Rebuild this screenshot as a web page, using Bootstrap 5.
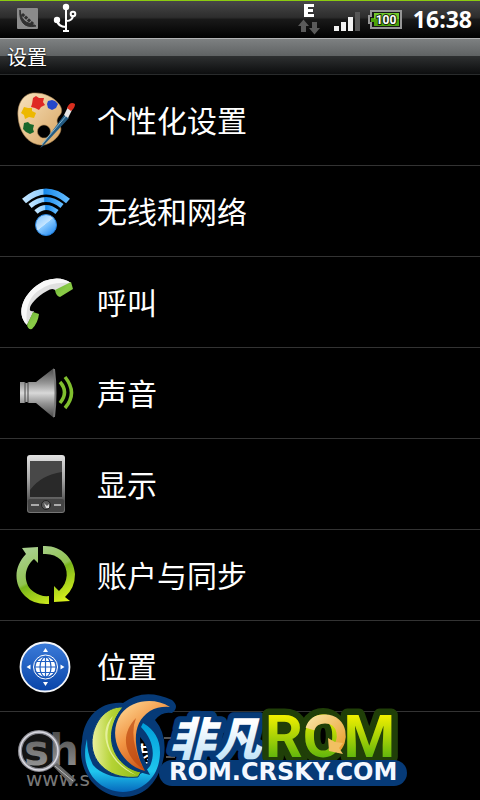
<!DOCTYPE html>
<html lang="zh-CN">
<head>
<meta charset="utf-8">
<meta name="viewport" content="width=device-width, initial-scale=1">
<title>设置</title>
<link href="https://cdn.jsdelivr.net/npm/bootstrap@5.3.0/dist/css/bootstrap.min.css" rel="stylesheet">
<style>
  body { background: #000; color: #fff; font-family: "Noto Sans CJK SC", sans-serif; }
  .screen { min-height: 100vh; max-height: 100vh; }
  .statusbar { height: 38px; border-top: 1px solid #8ccb10; background: linear-gradient(#484848 0, #2d2d2d 44%, #191919 50%, #000 100%); }
  .clock { font: 700 23px/36px "Open Sans", sans-serif; }
  .titlebar { height: 37px; padding: 0 7px; border-top: 1px solid #b0b2b3; border-bottom: 1px solid #292b2c; background: linear-gradient(#7d8081 0, #5f6263 49%, #2d2f30 50%, #0c0d0e 100%); }
  .titlebar h1 { font-size: 20px; line-height: 35px; text-shadow: 0 1px 2px #000; }
  .settings .list-group-item { padding: 15px; border-color: #333; border-width: 0 0 1px; gap: 22px; font-size: 30px; line-height: 58px; }
  .settings svg { width: 60px; height: 60px; flex: none; }
  .brand { pointer-events: none; }
</style>
<script src="https://cdn.jsdelivr.net/npm/bootstrap@5.3.0/dist/js/bootstrap.bundle.min.js"></script>
</head>
<body>
<div class="screen position-relative overflow-hidden">
  <div class="statusbar d-flex justify-content-between ps-3 pe-2">
    <div class="d-flex">
      <svg width="64" height="37" viewBox="16 1 64 37" aria-hidden="true">
        <rect x="17" y="8" width="21" height="21" rx="1" fill="#8b8b8b"/>
        <path d="M20 10Q21 19 26 22L36 26Q27 28 23 23Q19 18 20 10Z" fill="#303030" stroke="#303030"/>
        <path d="M22 14L34 25" stroke="#303030" stroke-width="3" stroke-dasharray="3 1"/>
        <g fill="none" stroke="#fff" stroke-width="2"><path d="M66 7V31M57 20Q58 27 66 27M73 15Q73 21 66 21"/><circle cx="73" cy="14" r="2.3"/></g>
        <g fill="#fff"><circle cx="66" cy="7" r="3.2"/><circle cx="57" cy="20" r="3.2"/><path d="M63 30h6v2h-6z"/></g>
      </svg>
    </div>
    <div class="d-flex gap-2">
      <svg width="108" height="37" viewBox="296 1 108 37" aria-hidden="true">
        <path d="M303 4h10v3h-6v2h5v3h-5v2h6v3h-10z" fill="#fff"/>
        <path d="M302.500 19.500l5.500 6.500h-3v6h-5v-6h-3zM311 22h5v6h3l-5.500 6.500L308 28h3z" fill="#5a5a5a"/>
        <g fill="#f1f1f1"><path d="M333 26h5v5h-5zM340 22h5v9h-5zM347 17h5v14h-5z"/></g>
        <path d="M354 12h5v19h-5z" fill="#565656"/>
        <path d="M370 11h30v17h-30v-5h-2v-7h2z" fill="#151515" stroke="#969696" stroke-width="2"/>
        <path d="M373 13h25v13h-25v-4h-3v-4h3z" fill="#4ca30b"/><path d="M373 13h25v6h-25z" fill="#70c82b"/>
        <text x="385" y="24" text-anchor="middle" font-family="Roboto, sans-serif" font-size="12" font-weight="700" fill="#fff" stroke="#162607" stroke-width="2" paint-order="stroke">100</text>
      </svg>
      <time class="clock">16:38</time>
    </div>
  </div>
  <header class="titlebar"><h1 class="m-0 fw-normal">设置</h1></header>

  <main class="settings list-group list-group-flush">
    <a href="#personal" class="list-group-item d-flex bg-transparent text-white">
      <svg viewBox="15 90 60 60" aria-hidden="true">
        <defs><linearGradient id="wood" x2="1" y2="1"><stop stop-color="#f8e2bd"/><stop offset="1" stop-color="#d7a562"/></linearGradient></defs>
        <path fill-rule="evenodd" d="M36 93C25 92 17 102 18 116C19 134 30 146 44 145C54 143 64 132 60 126C56 123 56 119 60 115C67 107 51 93 36 93ZM44 125A6.500 6.500 0 1 1 43.900 125Z" fill="url(#wood)" stroke="#a98554" stroke-width=".6"/>
        <path d="M33 98l3-2 3 2 5 0-1 4 2 3-4 2-2 3-4-2-4-1 1-3z" fill="#df2824"/>
        <path d="M48 101l4-1 3 1 3 3-2 4-4 2-4-2-1-4z" fill="#2447ca"/>
        <path d="M24 107l4 1 4 0 0 3 4 2-2 5-5-1-4 2-1-4-3-2z" fill="#edb800"/>
        <path d="M24 123l4-1 2 2 4 1-1 4 1 3-4 2-4-2-3-3z" fill="#19682b"/>
        <path d="M40 148L64 115L69 118L43 146Z" fill="#235b82"/><path d="M42 144L66 116" stroke="#83b7d3" stroke-width="1"/>
        <path d="M64 115l4-8 4 3-4 8z" fill="#e6e6e6"/><path d="M67 108q3-7 8-4q0 4-4 7z" fill="#d92e1e"/>
      </svg><span>个性化设置</span></a>
    <a href="#wireless" class="list-group-item d-flex bg-transparent text-white">
      <svg viewBox="15 181 60 60" aria-hidden="true">
        <defs><linearGradient id="wave"><stop stop-color="#c2e5ff"/><stop offset=".42" stop-color="#8fceff"/><stop offset=".46" stop-color="#1689ec"/><stop offset="1" stop-color="#63bbff"/></linearGradient>
        <linearGradient id="ball" x2=".8" y2="1"><stop stop-color="#7dc2ff"/><stop offset=".5" stop-color="#c5e5ff"/><stop offset=".52" stop-color="#8acaff"/><stop offset="1" stop-color="#268cf2"/></linearGradient></defs>
        <g fill="none" stroke="url(#wave)"><path d="M24 201Q46 182 68 201" stroke-width="6"/><path d="M30 206Q46 193 62 206" stroke-width="5"/><path d="M36 212Q46 203 57 212" stroke-width="5"/></g>
        <circle cx="46" cy="225" r="10.500" fill="url(#ball)" stroke="#2782dc"/>
      </svg><span>无线和网络</span></a>
    <a href="#call" class="list-group-item d-flex bg-transparent text-white">
      <svg viewBox="15 272 60 60" aria-hidden="true">
        <defs><linearGradient id="cap" x2="1" y2="1"><stop stop-color="#328b13"/><stop offset=".5" stop-color="#8acb47"/><stop offset="1" stop-color="#55a71e"/></linearGradient></defs>
        <path d="M27 325C15 313 23 292 44 281Q60 275 71 283L56 291Q53 287 47 291C36 297 30 305 30 308Q29 312 34 311Z" fill="#e0e0e0"/>
        <path d="M27 325C15 313 23 292 44 281Q60 275 71 283Q50 281 38 291Q24 301 27 325Z" fill="#f8f8f8"/>
        <path d="M27 325L33 312L39 314Q38 323 32 329Q28 330 27 325ZM55 290L71 282L73 289L60 297Q56 296 55 290Z" fill="url(#cap)"/>
      </svg><span>呼叫</span></a>
    <a href="#sound" class="list-group-item d-flex bg-transparent text-white">
      <svg viewBox="15 363 60 60" aria-hidden="true">
        <defs><linearGradient id="metal" x2="0" y2="1"><stop stop-color="#454545"/><stop offset=".3" stop-color="#959595"/><stop offset=".5" stop-color="#d8d8d8"/><stop offset=".7" stop-color="#969696"/><stop offset="1" stop-color="#444"/></linearGradient></defs>
        <path d="M20 382h5v1h3v-1h8L54 368q3 25 0 50L36 403h-8v-1h-3v1h-5z" fill="url(#metal)"/><path d="M25 382v21M28 382v21" stroke="#444"/><path d="M54 369q3 24 0 48" fill="none" stroke="#777" stroke-width="2"/>
        <path d="M60 382q9 10 0 21M65 377q13 16 0 31" fill="none" stroke="#80bf2e" stroke-width="3.500"/>
      </svg><span>声音</span></a>
    <a href="#display" class="list-group-item d-flex bg-transparent text-white">
      <svg viewBox="15 454 60 60" aria-hidden="true">
        <defs><linearGradient id="body" x2="0" y2="1"><stop stop-color="#e2e2e2"/><stop offset=".4" stop-color="#aaa"/><stop offset=".8" stop-color="#555"/><stop offset="1" stop-color="#777"/></linearGradient></defs>
        <rect x="27" y="455" width="38" height="58" rx="3" fill="url(#body)"/><rect x="28" y="499" width="36" height="13" rx="2" fill="#444"/>
        <path d="M30 461h32v36H30z" fill="#292929"/><path d="M30 461h32v11Q41 475 30 490Z" fill="#484848"/>
        <path d="M31 505h8M54 505h7" stroke="#aaa" stroke-width="2"/><circle cx="46" cy="505" r="4.500" fill="#5c5c5c" stroke="#222"/><path d="M44 503l3 3 2-2v4h-3z" fill="#ddd"/>
      </svg><span>显示</span></a>
    <a href="#sync" class="list-group-item d-flex bg-transparent text-white">
      <svg viewBox="15 545 60 60" aria-hidden="true">
        <defs><linearGradient id="lime" gradientUnits="userSpaceOnUse" x1="30" y1="550" x2="58" y2="604"><stop stop-color="#a8cf8c"/><stop offset=".45" stop-color="#92c351"/><stop offset=".5" stop-color="#79b51b"/><stop offset="1" stop-color="#d9f11c"/></linearGradient></defs>
        <path d="M22 548l16-1v16l-4-4C23 568 23 585 34 592Q41 597 49 596v8Q34 605 25 596C13 584 14 566 26 554Z" fill="url(#lime)"/>
        <path d="M43 546C61 545 74 558 75 574Q75 588 65 597l5 4-16 1v-16l5 5C69 582 69 569 61 560Q54 553 43 554Z" fill="url(#lime)"/>
      </svg><span>账户与同步</span></a>
    <a href="#location" class="list-group-item d-flex bg-transparent text-white">
      <svg viewBox="15 636 60 60" aria-hidden="true">
        <defs><linearGradient id="globe" x2="0" y2="1"><stop stop-color="#3b7bd9"/><stop offset="1" stop-color="#0844a8"/></linearGradient></defs>
        <circle cx="45" cy="667" r="24.500" fill="url(#globe)" stroke="#f3f5f9" stroke-width="1.800"/>
        <circle cx="45.500" cy="667" r="12" fill="none" stroke="#fff" stroke-width="1"/><circle cx="45.500" cy="667" r="10" fill="#fff"/>
        <g fill="none" stroke="#1f5fc2" stroke-width="1.200"><ellipse cx="45.500" cy="667" rx="5.500" ry="10"/><path d="M45.500 657v20M35 667h21M37 661.500h17M37 672.500h17"/></g>
        <path d="M45.500 648l2.500 4h-5zM45.500 686l2.500-4h-5zM26.500 667l4-2.500v5zM64.500 667l-4-2.500v5z" fill="#fff"/>
      </svg><span>位置</span></a>
    <a href="#search" class="list-group-item d-flex bg-transparent text-white">
      <svg viewBox="15 727 60 60" aria-hidden="true"></svg><span>搜索</span></a>
  </main>

  <svg class="brand position-absolute bottom-0 start-0 w-100" viewBox="0 690 480 110" role="img" aria-label="非凡ROM ROM.CRSKY.COM">
    <defs>
      <linearGradient id="grey" x2="0" y2="1"><stop stop-color="#444"/><stop offset="1" stop-color="#999"/></linearGradient>
      <linearGradient id="leaf" x2="1" y2="0"><stop stop-color="#eaf0a0"/><stop offset=".4" stop-color="#b5d335"/><stop offset="1" stop-color="#8dbb17"/></linearGradient>
      <linearGradient id="flame" x2=".6" y2="1"><stop stop-color="#ffe1a0"/><stop offset=".5" stop-color="#f29645"/><stop offset="1" stop-color="#c94c10"/></linearGradient>
      <linearGradient id="sea" x2="0" y2="1"><stop stop-color="#009fd9"/><stop offset=".7" stop-color="#1fc6ee"/><stop offset="1" stop-color="#0668bd"/></linearGradient>
      <linearGradient id="ice" x2="0" y2="1"><stop offset=".3" stop-color="#fff"/><stop offset="1" stop-color="#b3ddf6"/></linearGradient>
      <linearGradient id="rom" x2="0" y2="1"><stop offset=".2" stop-color="#f0ef00"/><stop offset=".8" stop-color="#62b60c"/></linearGradient>
      <linearGradient id="gold" x2="1" y2="1"><stop stop-color="#f7df9b"/><stop offset="1" stop-color="#eba132"/></linearGradient>
    </defs>
    <text x="24" y="765" font-family="DejaVu Sans, sans-serif" font-size="42" font-weight="700" fill="url(#grey)">sh</text>
    <text x="26" y="786" font-family="DejaVu Sans, sans-serif" font-size="20" fill="#777">www.s</text>
    <path d="M164 738h10M166 757h9" stroke="#555" stroke-width="2"/>
    <circle cx="39" cy="751" r="19" fill="#fff" fill-opacity=".08" stroke="#8d8d94" stroke-width="4"/><circle cx="39" cy="751" r="19" fill="none" stroke="#dcdce4" stroke-width="1.500"/>
    <path d="M53 766l4-3 19 17-5 5z" fill="#666"/><path d="M55 766l18 15" stroke="#bbb"/>

    <path fill-rule="evenodd" d="M82 741C84 715 102 701 123 703Q144 687 172 700Q180 707 172 713Q162 711 155 720Q167 734 164 756C159 783 144 797 123 797C96 796 76 770 82 741ZM140 737Q140 752 147 765Q151 749 140 737Z" fill="#063a77"/>
    <path d="M87 739C79 769 97 791 123 792C145 791 160 775 160 752Q160 733 143 723L141 727C152 738 156 753 150 766C139 782 107 781 93 765Q87 754 87 739Z" fill="url(#sea)"/>
    <path d="M123 707C105 706 92 724 92 743C92 764 111 780 138 777L141 772C116 768 99 737 123 707Z" fill="url(#leaf)" stroke="#063a77" stroke-width="1"/>
    <path d="M113 716C101 737 108 760 136 775C113 767 94 735 113 716Z" fill="#e4f09a"/>
    <path d="M170 707C154 697 132 700 121 714C107 734 119 764 145 771C136 755 128 725 150 711Q159 706 170 707Z" fill="url(#flame)" stroke="#063a77" stroke-width="5" paint-order="stroke"/>
    <path d="M144 770C122 755 121 733 136 718Q128 738 144 770Z" fill="#b8420c" opacity=".65"/>

    <g stroke-linejoin="round" paint-order="stroke">
      <text x="169" y="756" font-family="Noto Sans CJK SC, sans-serif" font-size="46" font-weight="900" font-style="italic" fill="url(#ice)" stroke="#063a77" stroke-width="12" paint-order="stroke">非凡</text>
      <text x="265" y="757" font-family="Roboto, sans-serif" font-size="59" font-weight="700" fill="url(#rom)" stroke="#203f08" stroke-width="13" paint-order="stroke">ROM</text>
      <path d="M310 729Q313 719 325 719C344 719 345 743 335 749" fill="none" stroke="url(#gold)" stroke-width="9"/><path d="M328 738l1 13 14 3-4-6 4-5-8-1z" fill="#f2c062"/>
      <path d="M172 773H394" stroke="#063a77" stroke-width="26" stroke-linecap="round" fill="none"/>
      <text x="169" y="780" font-family="DejaVu Sans, sans-serif" font-size="24" font-weight="700" fill="#f4f8ff">ROM.CRSKY.COM</text>
    </g>
  </svg>
</div>
</body>
</html>
